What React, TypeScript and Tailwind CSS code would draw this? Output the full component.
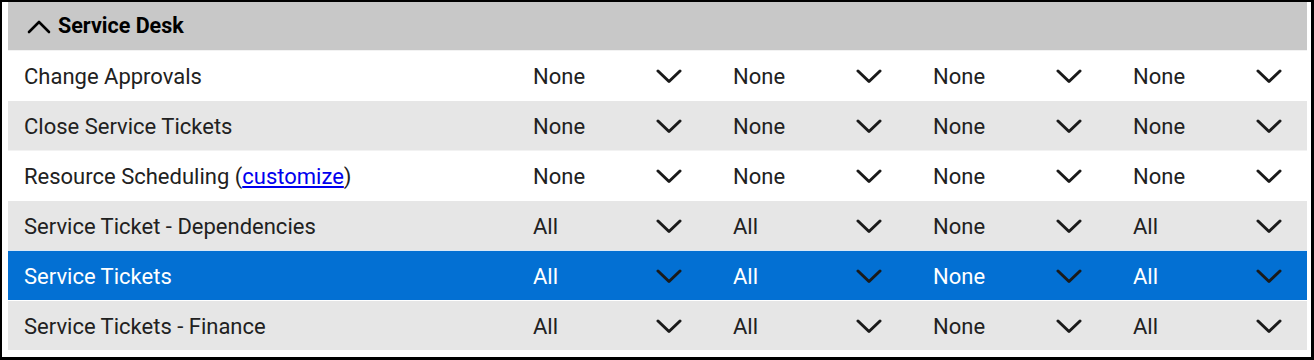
import React from "react";

type Row = {
  label: React.ReactNode;
  values: string[];
};

const rows: Row[] = [
  { label: "Change Approvals", values: ["None", "None", "None", "None"] },
  { label: "Close Service Tickets", values: ["None", "None", "None", "None"] },
  {
    label: (
      <>
        Resource Scheduling (
        <a href="#" className="text-[#0000ee] underline">
          customize
        </a>
        )
      </>
    ),
    values: ["None", "None", "None", "None"],
  },
  { label: "Service Ticket - Dependencies", values: ["All", "All", "None", "All"] },
  { label: "Service Tickets", values: ["All", "All", "None", "All"] },
  { label: "Service Tickets - Finance", values: ["All", "All", "None", "All"] },
];

const ChevronDown = () => (
  <svg width="26" height="15" viewBox="0 0 26 15" fill="none">
    <polyline
      points="2,2 13,12.5 24,2"
      stroke="currentColor"
      strokeWidth="3"
      strokeLinecap="round"
      strokeLinejoin="round"
    />
  </svg>
);

const ChevronUp = () => (
  <svg width="24" height="16" viewBox="0 0 24 16" fill="none">
    <polyline
      points="2,14 12,4 22,14"
      stroke="currentColor"
      strokeWidth="2.6"
      strokeLinecap="round"
      strokeLinejoin="round"
    />
  </svg>
);

const App = () => {
  return (
    <div
      className="w-[1314px] h-[360px] bg-white border-black border-t-2 border-l-2 border-r-[3px] border-b-[3px] pl-[6px] pr-[4px] pb-[5px] text-[#212121]"
      style={{ fontFamily: "Roboto, 'Liberation Sans', sans-serif" }}
    >
      <div className="h-[48px] bg-[#c8c8c8] flex items-center pl-[19px] gap-[7px] text-black">
        <ChevronUp />
        <span className="text-[21.5px] font-bold">Service Desk</span>
      </div>
      {rows.map((row, i) => {
        const selected = i === 4;
        const bg = selected
          ? "bg-[#0370d3] text-white border-[#d9e8f6]"
          : i % 2 === 0
          ? "bg-white border-[#f2f2f2]"
          : "bg-[#e6e6e6] border-white";
        return (
          <div
            key={i}
            className={`h-[50px] flex items-center pt-[2px] border-t-[1.5px] text-[22px] ${bg}`}
          >
            <div className="w-[517px] pl-[16px]">{row.label}</div>
            <div className="flex gap-[20px]">
              {row.values.map((v, j) => (
                <div
                  key={j}
                  className={`w-[180px] flex items-center justify-between pl-[8px] pr-[23px] ${
                    selected ? "text-white" : "text-[#212121]"
                  }`}
                >
                  <span>{v}</span>
                  <span className="text-[#1a1a1a]">
                    <ChevronDown />
                  </span>
                </div>
              ))}
            </div>
          </div>
        );
      })}
    </div>
  );
};

export default App;
